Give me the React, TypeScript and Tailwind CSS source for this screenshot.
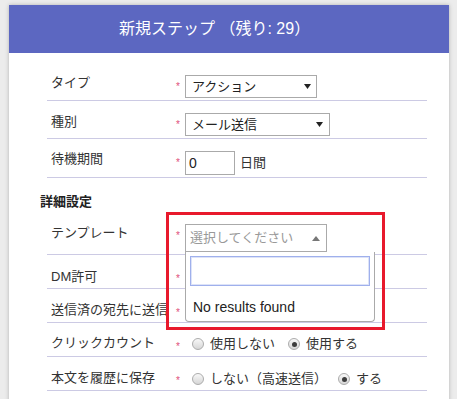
import type { ReactNode } from "react";

type RowProps = {
  h: string;
  label: string;
  labelPt: string;
  starPt: string;
  ctrlPt?: string;
  children?: ReactNode;
};

function Row({ h, label, labelPt, starPt, ctrlPt = "", children }: RowProps) {
  return (
    <div className={`flex border-b border-[#cccae4] ${h}`}>
      <div
        className={`w-[129px] shrink-0 overflow-hidden whitespace-nowrap pl-[4px] text-[13px] leading-[20px] text-[#333] ${labelPt}`}
      >
        {label}
      </div>
      <div
        className={`w-[9px] shrink-0 text-[10px] leading-[10px] text-[#e0507a] ${starPt}`}
      >
        *
      </div>
      <div className={`relative flex-1 ${ctrlPt}`}>{children}</div>
    </div>
  );
}

function Radio({ checked }: { checked?: boolean }) {
  return (
    <span className="flex h-[12px] w-[12px] shrink-0 items-center justify-center rounded-full border border-[#acacac] bg-linear-to-b from-[#f8f8f8] to-[#d6d6d6]">
      {checked && <span className="h-[5px] w-[5px] rounded-full bg-[#3d3d3d]" />}
    </span>
  );
}

function DownArrow() {
  return (
    <svg width="7" height="5" viewBox="0 0 7 5">
      <polygon points="0,0 7,0 3.5,5" fill="#222" />
    </svg>
  );
}

export default function App() {
  return (
    <div className="h-[399px] w-[457px] overflow-hidden bg-[#ececec] pt-[5px] pl-[9px] [font-family:'Liberation_Sans','Noto_Sans_CJK_JP',sans-serif]">
      <div className="relative h-[400px] w-[440px] bg-white shadow-[0_0_4px_rgba(0,0,0,0.25)]">
        <div className="flex h-[48px] items-center bg-[#5c67c1] pl-[110px] text-[16px] text-white">
          新規ステップ （残り: 29）
        </div>

        <div className="pt-[10px] pl-[31px]">
          <div className="ml-[7px] w-[380px]">
            <Row h="h-[38px]" label="タイプ" labelPt="pt-[10px]" starPt="pt-[19px]" ctrlPt="pt-[12px]">
              <div className="flex h-[23px] w-[132px] items-center justify-between border border-[#aaa] pr-[5px] pl-[6px] text-[13px] text-[#222]">
                アクション
                <DownArrow />
              </div>
            </Row>
            <Row h="h-[38px]" label="種別" labelPt="pt-[11px]" starPt="pt-[19px]" ctrlPt="pt-[12px]">
              <div className="flex h-[23px] w-[145px] items-center justify-between border border-[#aaa] pr-[6px] pl-[6px] text-[13px] text-[#222]">
                メール送信
                <DownArrow />
              </div>
            </Row>
            <Row h="h-[39px]" label="待機期間" labelPt="pt-[10px]" starPt="pt-[19px]" ctrlPt="pt-[12px]">
              <div className="flex items-center">
                <div className="flex h-[24px] w-[50px] items-center border border-[#aaa] pl-[3px] text-[14px] text-[#222]">
                  0
                </div>
                <span className="ml-[5px] text-[13px] text-[#333]">日間</span>
              </div>
            </Row>
          </div>

          <div className="h-[37px] pt-[14px] text-[13px] leading-[20px] font-bold text-[#222]">
            詳細設定
          </div>

          <div className="ml-[7px] w-[380px]">
            <Row h="h-[40px]" label="テンプレート" labelPt="pt-[8px]" starPt="pt-[16px]" ctrlPt="pt-[9px]">
              <div className="relative w-[142px]">
                <div className="flex h-[28px] w-[142px] items-center justify-between border border-[#aaa] pr-[6px] pl-[4px] text-[13px] text-[#999]">
                  選択してください
                  <svg width="8" height="5" viewBox="0 0 8 5">
                    <polygon points="0,5 8,5 4,0" fill="#777" />
                  </svg>
                </div>
                <div className="absolute top-[28px] left-0 z-10 h-[70px] w-[190px] rounded-b-[4px] border border-t-0 border-[#aaa] bg-white px-[4px] pt-[4px]">
                  <div className="h-[30px] w-[180px] border border-[#9fb0ec] shadow-[inset_0_0_0_1px_rgba(159,176,236,0.35)]" />
                  <div className="mt-[11px] pl-[3px] text-[14px] leading-[20px] text-[#222]">
                    No results found
                  </div>
                </div>
              </div>
            </Row>
            <Row h="h-[34px]" label="DM許可" labelPt="pt-[12px]" starPt="pt-[19px]" />
            <Row h="h-[34px]" label="送信済の宛先に送信" labelPt="pt-[11px]" starPt="pt-[19px]" />
            <Row h="h-[34px]" label="クリックカウント" labelPt="pt-[10px]" starPt="pt-[19px]" ctrlPt="pt-[11px]">
              <div className="flex h-[20px] items-center pl-[7px] text-[13px] text-[#333]">
                <Radio />
                <span className="ml-[6px]">使用しない</span>
                <span className="ml-[13px]">
                  <Radio checked />
                </span>
                <span className="ml-[6px]">使用する</span>
              </div>
            </Row>
            <Row h="h-[34px]" label="本文を履歴に保存" labelPt="pt-[11px]" starPt="pt-[19px]" ctrlPt="pt-[12px]">
              <div className="flex h-[20px] items-center pl-[7px] text-[13px] text-[#333]">
                <Radio />
                <span className="ml-[6px]">しない（高速送信）</span>
                <span className="ml-[11px]">
                  <Radio checked />
                </span>
                <span className="ml-[6px]">する</span>
              </div>
            </Row>
          </div>
        </div>

        <div className="pointer-events-none absolute top-[207px] left-[157px] z-20 h-[118px] w-[219px] border-[3px] border-[#e8192c]" />
      </div>
    </div>
  );
}
